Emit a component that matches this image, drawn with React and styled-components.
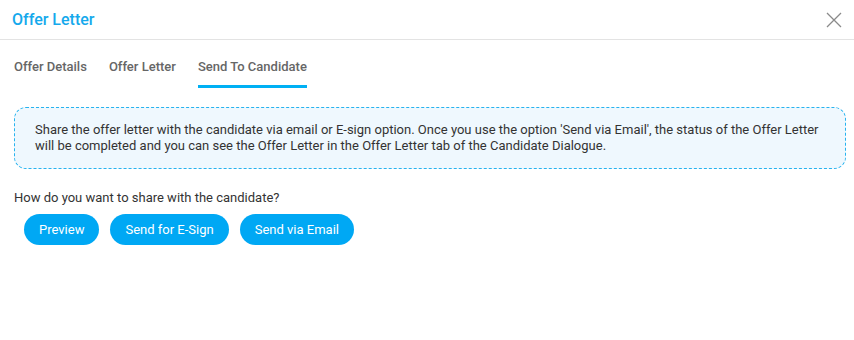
import React, { useState } from "react";
import styled, { createGlobalStyle } from "styled-components";

const GlobalStyle = createGlobalStyle`
  body {
    margin: 0;
    background: #fff;
    font-family: Roboto, "Noto Sans", sans-serif;
  }
`;

const Dialog = styled.div`
  width: 854px;
  height: 340px;
  background: #fff;
`;

const Header = styled.div`
  height: 40px;
  display: flex;
  align-items: center;
  justify-content: space-between;
  padding: 0 8px 0 12px;
  border-bottom: 1px solid #e3e3e3;
  box-sizing: border-box;
`;

const Title = styled.h2`
  margin: 0;
  font-size: 16px;
  font-weight: 500;
  color: #15a9ec;
`;

const CloseButton = styled.button`
  border: 0;
  background: none;
  padding: 0;
  width: 24px;
  height: 24px;
  display: flex;
  align-items: center;
  justify-content: center;
  cursor: pointer;
`;

const Tabs = styled.div`
  display: flex;
  gap: 22px;
  padding: 0 14px;
  height: 48px;
`;

const Tab = styled.div`
  display: flex;
  align-items: center;
  padding-top: 7px;
  font-size: 13px;
  font-weight: 500;
  color: #666;
  cursor: pointer;
  box-sizing: border-box;
  border-bottom: 3px solid ${(p) => (p.active ? "#00b0f4" : "transparent")};
`;

const Body = styled.div`
  padding: 19px 8px 0 14px;
`;

const InfoBox = styled.div`
  border: 1px dashed #27b3ef;
  border-radius: 12px;
  background: #eff8fe;
  padding: 14px 20px;
  font-size: 13px;
  line-height: 16px;
  color: #333;
`;

const Question = styled.p`
  margin: 21px 0 9px;
  font-size: 13px;
  color: #333;
`;

const Actions = styled.div`
  display: flex;
  gap: 11px;
  padding-left: 10px;
`;

const PillButton = styled.button`
  height: 31px;
  padding: 0 15px;
  border: 0;
  border-radius: 16px;
  background: #00a8f4;
  color: #fff;
  font-family: Roboto, "Noto Sans", sans-serif;
  font-size: 13px;
  font-weight: 400;
  cursor: pointer;
`;

const tabs = ["Offer Details", "Offer Letter", "Send To Candidate"];

export default function App() {
  const [active, setActive] = useState(2);

  return (
    <>
      <GlobalStyle />
      <Dialog>
        <Header>
          <Title>Offer Letter</Title>
          <CloseButton aria-label="Close">
            <svg width="16" height="16" viewBox="0 0 16 16">
              <path d="M1 1L15 15M15 1L1 15" stroke="#8a8a8a" strokeWidth="1.3" />
            </svg>
          </CloseButton>
        </Header>
        <Tabs>
          {tabs.map((t, i) => (
            <Tab key={t} active={i === active} onClick={() => setActive(i)}>
              {t}
            </Tab>
          ))}
        </Tabs>
        <Body>
          <InfoBox>
            Share the offer letter with the candidate via email or E-sign option. Once you use the
            option 'Send via Email', the status of the Offer Letter will be completed and you can see
            the Offer Letter in the Offer Letter tab of the Candidate Dialogue.
          </InfoBox>
          <Question>How do you want to share with the candidate?</Question>
          <Actions>
            <PillButton>Preview</PillButton>
            <PillButton>Send for E-Sign</PillButton>
            <PillButton>Send via Email</PillButton>
          </Actions>
        </Body>
      </Dialog>
    </>
  );
}
